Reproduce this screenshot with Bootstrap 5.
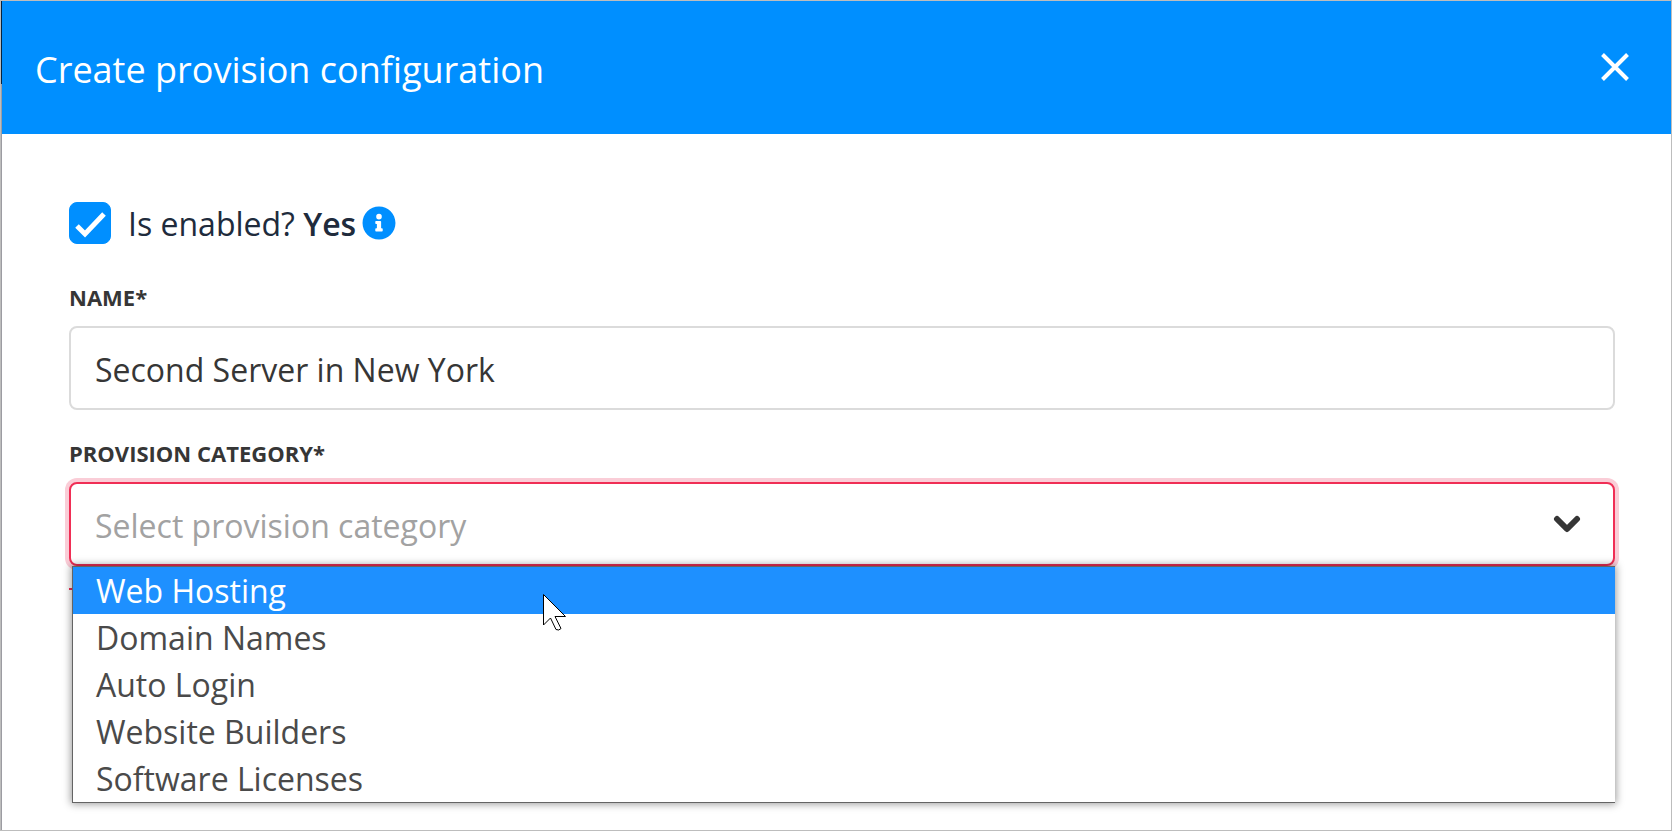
<!DOCTYPE html>
<html lang="en">
<head>
<meta charset="utf-8">
<meta name="viewport" content="width=device-width, initial-scale=1">
<title>Create provision configuration</title>
<link href="https://cdn.jsdelivr.net/npm/bootstrap@5.3.0/dist/css/bootstrap.min.css" rel="stylesheet">
<style>
  :root { --brand: #008fff; --ink: #363636; --danger: #f02e55; }
  body { font-family: "Segoe UI", "Open Sans", "Noto Sans", sans-serif; font-size: 32px; line-height: 48px; color: var(--ink); background: #fff; }
  .panel { min-height: 100vh; border: 1px solid #bdbdbd; padding-left: 1px; background: linear-gradient(#06233f 83px, #9c9ca2 83px); }
  .panel-head { background: var(--brand); padding: 0 42px 2px 33px; height: 133px; }
  .panel-title { font-size: 36px; line-height: 56px; font-weight: 400; padding-top: 6px; }
  .panel-body { padding: 66px 56px 24px 67px; background: #fff; }
  .enabled-row { gap: 17px; margin-bottom: 36px; line-height: 42px; color: #202b3c; }
  .enabled-row .caption { padding-top: 3px; }
  .enabled-row .form-check-input { width: 42px; height: 42px; border-radius: 8px; }
  .enabled-row .form-check-input:checked { background-color: var(--brand); border-color: var(--brand);
    background-size: 42px; background-image: url("data:image/svg+xml,%3Csvg xmlns='http://www.w3.org/2000/svg' viewBox='0 0 42 42'%3E%3Cpath fill='none' stroke='%23fff' stroke-width='5' d='M8 24L16 32L35 12'/%3E%3C/svg%3E"); }
  .info-icon { margin-left: 6px; }
  .field-label { display: block; font-size: 22px; line-height: 32px; font-weight: 700; margin-bottom: 13px; text-transform: uppercase; }
  .field { height: 84px; padding: 2px 24px 0; font-size: 32px; line-height: 48px; color: var(--ink); border: 2px solid #dbdbdb; border-radius: 8px; background-color: #fff; }
  .field-group + .field-group { margin-top: 27px; }
  .field.is-wrong { padding-top: 4px; color: #a2a2a2; border-color: var(--danger); box-shadow: 0 0 0 4px #facdd7;
    background-size: 28px 18px; background-position: right 32px center;
    background-image: url("data:image/svg+xml,%3Csvg xmlns='http://www.w3.org/2000/svg' viewBox='0 0 28 18'%3E%3Cpath fill='none' stroke='%23363636' stroke-width='6' stroke-linecap='round' stroke-linejoin='round' d='M4 4l10 10L24 4'/%3E%3C/svg%3E"); }
  .error-edge { width: 40px; height: 2px; margin-top: 22px; background: var(--danger); }
  .options { top: 84px; left: 3px; right: 0; border: 1px solid #646464; border-right: 0; box-shadow: 0 0 8px 1px rgba(0,0,0,.4); background: #fff; }
  .option { border: 0; background: #fff; color: #4a4a4a; line-height: 47px; padding: 0 23px; text-align: left; }
  .option.chosen { background: #1e90ff; color: #fff; }
  .pointer { left: 470px; top: 27px; }
</style>
</head>
<body>
<main class="panel d-flex flex-column">
  <header class="panel-head d-flex align-items-center justify-content-between">
    <h1 class="panel-title text-white mb-0">Create provision configuration</h1>
    <button type="button" class="btn d-flex p-0 border-0" aria-label="Close">
      <svg width="28" height="28" viewBox="0 0 28 28"><path d="M1.500 1.500l25 25M26.500 1.500l-25 25" stroke="#fff" stroke-width="4" fill="none"/></svg>
    </button>
  </header>
  <form class="panel-body flex-grow-1">
    <div class="enabled-row d-flex align-items-center">
      <input class="form-check-input m-0" type="checkbox" id="enabled" checked>
      <label for="enabled" class="d-flex align-items-center">
        <span class="caption">Is enabled? <strong class="fw-semibold">Yes</strong></span>
        <svg class="info-icon" width="34" height="34" viewBox="0 0 512 512" role="img" aria-label="Information"><path fill="#008fff" d="M256 8C119 8 8 119 8 256s111 248 248 248 248-111 248-248S393 8 256 8zm0 110a42 42 0 1 1 0 84 42 42 0 0 1 0-84zm56 254a12 12 0 0 1-12 12h-88a12 12 0 0 1-12-12v-24a12 12 0 0 1 12-12h12v-64h-12a12 12 0 0 1-12-12v-24a12 12 0 0 1 12-12h64a12 12 0 0 1 12 12v100h12a12 12 0 0 1 12 12z"/></svg>
      </label>
    </div>
    <div class="field-group">
      <label class="field-label" for="name">Name*</label>
      <input class="field form-control" type="text" id="name" value="Second Server in New York">
    </div>
    <div class="field-group">
      <label class="field-label" for="category">Provision category*</label>
      <div class="position-relative">
        <select class="field is-wrong form-select" id="category">
          <option>Select provision category</option>
        </select>
        <div class="error-edge"></div>
        <div class="options position-absolute d-flex flex-column" role="listbox" aria-label="Provision category">
          <button type="button" class="option chosen" role="option" aria-selected="true">Web Hosting</button>
          <button type="button" class="option" role="option">Domain Names</button>
          <button type="button" class="option" role="option">Auto Login</button>
          <button type="button" class="option" role="option">Website Builders</button>
          <button type="button" class="option" role="option">Software Licenses</button>
          <svg class="pointer position-absolute" width="24" height="39" viewBox="0 0 24 39" aria-hidden="true"><path d="M.5.500v30.500l7-7 5.500 11.500q3 1.500 5-1l-6-12h10.500z" fill="#fff" stroke="#000"/></svg>
        </div>
      </div>
    </div>
  </form>
</main>
<script src="https://cdn.jsdelivr.net/npm/bootstrap@5.3.0/dist/js/bootstrap.bundle.min.js"></script>
</body>
</html>
